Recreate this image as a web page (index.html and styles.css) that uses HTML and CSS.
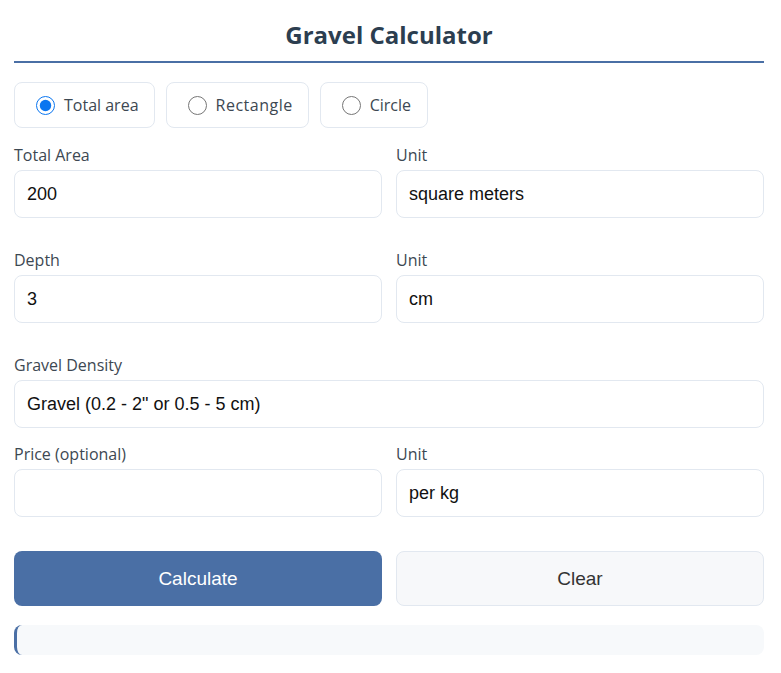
FILE: index.html
```html
<!DOCTYPE html>
<html lang="en">
<head>
<meta charset="utf-8">
<title>Gravel Calculator</title>
<link rel="stylesheet" href="styles.css">
</head>
<body>
<div class="card">
  <h1 class="title">Gravel Calculator</h1>
  <div class="shapes">
    <label class="opt"><input type="radio" name="shape" checked><span>Total area</span></label>
    <label class="opt"><input type="radio" name="shape"><span>Rectangle</span></label>
    <label class="opt"><input type="radio" name="shape"><span>Circle</span></label>
  </div>

  <div class="row">
    <div class="group">
      <label class="lbl">Total Area</label>
      <input class="field" type="text" value="200">
    </div>
    <div class="group">
      <label class="lbl">Unit</label>
      <div class="field select">square meters</div>
    </div>
  </div>

  <div class="row">
    <div class="group">
      <label class="lbl">Depth</label>
      <input class="field" type="text" value="3">
    </div>
    <div class="group">
      <label class="lbl">Unit</label>
      <div class="field select">cm</div>
    </div>
  </div>

  <div class="group">
    <label class="lbl">Gravel Density</label>
    <div class="field select">Gravel (0.2 - 2" or 0.5 - 5 cm)</div>
  </div>

  <div class="row">
    <div class="group">
      <label class="lbl">Price (optional)</label>
      <input class="field" type="text" value="">
    </div>
    <div class="group">
      <label class="lbl">Unit</label>
      <div class="field select">per kg</div>
    </div>
  </div>

  <div class="buttons">
    <button class="btn primary">Calculate</button>
    <button class="btn secondary">Clear</button>
  </div>

  <div class="result"></div>
</div>
</body>
</html>
```

FILE: styles.css
```css
html, body {
  margin: 0;
  padding: 0;
  background: #ffffff;
}
body {
  font-family: "Open Sans", "Noto Sans", sans-serif;
  color: #2c3e50;
}
.card {
  width: 750px;
  padding: 0 14px;
}
.title {
  margin: 0;
  padding-top: 19px;
  padding-bottom: 10px;
  text-align: center;
  font-size: 24px;
  font-weight: 700;
  line-height: 32px;
  color: #2c3e50;
  border-bottom: 2px solid #4a6fa5;
}
.shapes {
  display: flex;
  gap: 11px;
  margin-top: 19px;
  margin-bottom: 17px;
}
.opt {
  display: flex;
  align-items: center;
  gap: 9px;
  height: 44px;
  padding: 0 15px 0 21px;
  border: 1px solid #e2e8f0;
  border-radius: 8px;
  font-size: 16px;
  color: #3d4852;
}
.opt:nth-child(2) span {
  letter-spacing: 0.5px;
}
.opt:nth-child(3) {
  padding-right: 16px;
}
.opt input {
  margin: 0;
  width: 19px;
  height: 19px;
  accent-color: #0b76f0;
}
.row {
  display: grid;
  grid-template-columns: 1fr 1fr;
  gap: 14px;
  margin-bottom: 32px;
}
.group {
  margin-bottom: 16px;
}
.row .group {
  margin-bottom: 0;
}
.lbl {
  display: block;
  font-size: 16px;
  line-height: 21px;
  margin-bottom: 4px;
  color: #3d4852;
}
.field {
  box-sizing: border-box;
  display: flex;
  align-items: center;
  width: 100%;
  height: 48px;
  padding: 0 12px;
  border: 1px solid #e2e8f0;
  border-radius: 8px;
  background: #fff;
  font-family: "Liberation Sans", Arial, sans-serif;
  font-size: 18px;
  color: #111;
  outline: none;
}
.buttons {
  display: grid;
  grid-template-columns: 1fr 1fr;
  gap: 14px;
  margin-top: 34px;
}
.btn {
  height: 55px;
  border-radius: 8px;
  font-family: "Liberation Sans", Arial, sans-serif;
  font-size: 19px;
  cursor: pointer;
}
.primary {
  background: #4a6fa5;
  color: #fff;
  border: none;
}
.secondary {
  background: #f7f8fa;
  color: #333;
  border: 1px solid #e2e8f0;
}
.result {
  margin-top: 19px;
  height: 30px;
  background: #f7f9fb;
  border-left: 3px solid #4a6fa5;
  border-radius: 8px;
}
```
